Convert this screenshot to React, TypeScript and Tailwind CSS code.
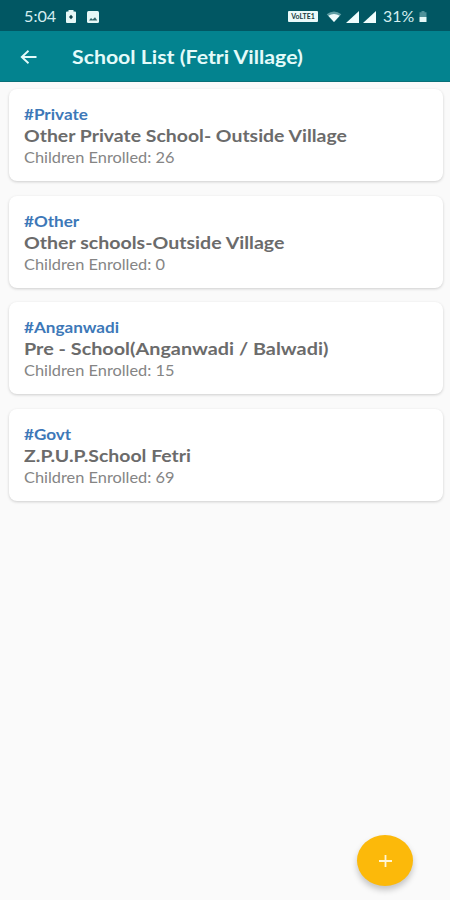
const schools = [
  { tag: '#Private', name: 'Other Private School- Outside Village', enrolled: 26, stretch: 'scale-x-[1.11]' },
  { tag: '#Other', name: 'Other schools-Outside Village', enrolled: 0, stretch: 'scale-x-[1.118]' },
  { tag: '#Anganwadi', name: 'Pre - School(Anganwadi / Balwadi)', enrolled: 15, stretch: 'scale-x-[1.132]' },
  { tag: '#Govt', name: 'Z.P.U.P.School Fetri', enrolled: 69, stretch: 'scale-x-[1.11]' },
];

function StatusBar() {
  return (
    <div className="flex h-[31px] items-center bg-[#015763] pt-[2px] pl-6 pr-[23px] text-[#d5eef0]">
      <span className="w-[41px] text-[15px] leading-none">
        <span className="inline-block origin-left scale-x-[1.08]">5:04</span>
      </span>
      <svg className="h-[13px] w-[12px]" viewBox="0 0 12 13">
        <path fill="#e6f8f7" d="M3.5 0h5v1.5H10a1 1 0 0 1 1 1V12a1 1 0 0 1-1 1H2a1 1 0 0 1-1-1V2.500a1 1 0 0 1 1-1h1.500z" />
        <path fill="#10444b" d="M6 4.800l2 2.200-2 2.200-2-2.200z" />
      </svg>
      <svg className="ml-[10px] h-3 w-3" viewBox="0 0 12 12">
        <rect width="12" height="12" rx="1.5" fill="#e6f8f7" />
        <path fill="#31666b" d="M2 9.500l2-2.500 1.700 1.500L8 6.300l2.300 3.200z" />
      </svg>
      <div className="ml-auto flex items-center">
        <span className="flex h-[11px] w-[30px] items-center justify-center rounded-[1px] bg-[#eafafa] text-[7px] leading-none font-bold text-[#173c42]">
          VoLTE1
        </span>
        <svg className="ml-2 h-[11px] w-4" viewBox="0 0 16 12">
          <path fill="#5d9da3" d="M0 3.500Q8-2.500 16 3.500L8 12z" />
          <path fill="#effdfd" d="M1.800 5.300Q8 1.500 14.200 5.300L8 12z" />
        </svg>
        <svg className="ml-1 h-3 w-[13px]" viewBox="0 0 13 12">
          <path fill="#effdfd" d="M13 0v12H0z" />
        </svg>
        <svg className="ml-1 h-3 w-[13px]" viewBox="0 0 13 12">
          <path fill="#effdfd" d="M13 0v12H0z" />
        </svg>
        <span className="ml-[7px] w-9 text-[15px] leading-none">
          <span className="inline-block origin-left scale-x-[1.06]">31%</span>
        </span>
        <svg className="h-[11px] w-2" viewBox="0 0 8 11">
          <path fill="#4f9199" d="M2.500 0h3v1.200H7.500V6h-7V1.200h2z" />
          <path fill="#e6f8f7" d="M.5 6h7v5h-7z" />
        </svg>
      </div>
    </div>
  );
}

function AppBar() {
  return (
    <header className="flex h-[51px] items-center border-b border-[#087078] bg-[#03838f] pt-px pl-[20px] text-[#e4fbfa]">
      <svg className="h-[14px] w-[17px]" viewBox="0 0 17 14" fill="none" stroke="currentColor" strokeWidth="1.900">
        <path d="M16.500 7H2M8.500 .8L1.800 7l6.700 6.200" />
      </svg>
      <h1 className="ml-[35px] origin-left scale-x-[1.12] text-[19px] leading-none font-bold whitespace-nowrap">
        School List (Fetri Village)
      </h1>
    </header>
  );
}

export default function App() {
  return (
    <div className="relative h-[900px] w-[450px] overflow-hidden bg-[#fafafa] font-['Lato','Liberation_Sans',sans-serif]">
      <StatusBar />
      <AppBar />
      <main className="flex flex-col gap-[14.500px] pt-[7.400px] pr-[7px] pl-[9px]">
        {schools.map((school) => (
          <article
            key={school.tag}
            className="flex h-[92px] flex-col items-start rounded-[8px] bg-white pt-[14px] pl-[15px] whitespace-nowrap shadow-[0_1px_3px_rgba(0,0,0,0.18)]"
          >
            <p className="origin-left scale-x-[1.14] text-[15px] leading-[22px] font-bold text-[#3d78b8]">{school.tag}</p>
            <h2 className={`origin-left text-[17.500px] leading-[22px] font-bold text-[#6b6b6b] ${school.stretch}`}>
              {school.name}
            </h2>
            <p className="origin-left scale-x-[1.09] text-[15px] leading-[20px] text-[#858585]">
              Children Enrolled: {school.enrolled}
            </p>
          </article>
        ))}
      </main>
      <button
        aria-label="Add school"
        className="absolute top-[835px] left-[357px] flex h-[51px] w-14 items-center justify-center rounded-[50%] bg-[#fcb90a] shadow-[0_4px_6px_rgba(0,0,0,0.22)]"
      >
        <svg className="h-3 w-[13px]" viewBox="0 0 13 12" stroke="#fff6d5" strokeWidth="1.800">
          <path d="M6.500 0v12M0 6h13" />
        </svg>
      </button>
    </div>
  );
}
